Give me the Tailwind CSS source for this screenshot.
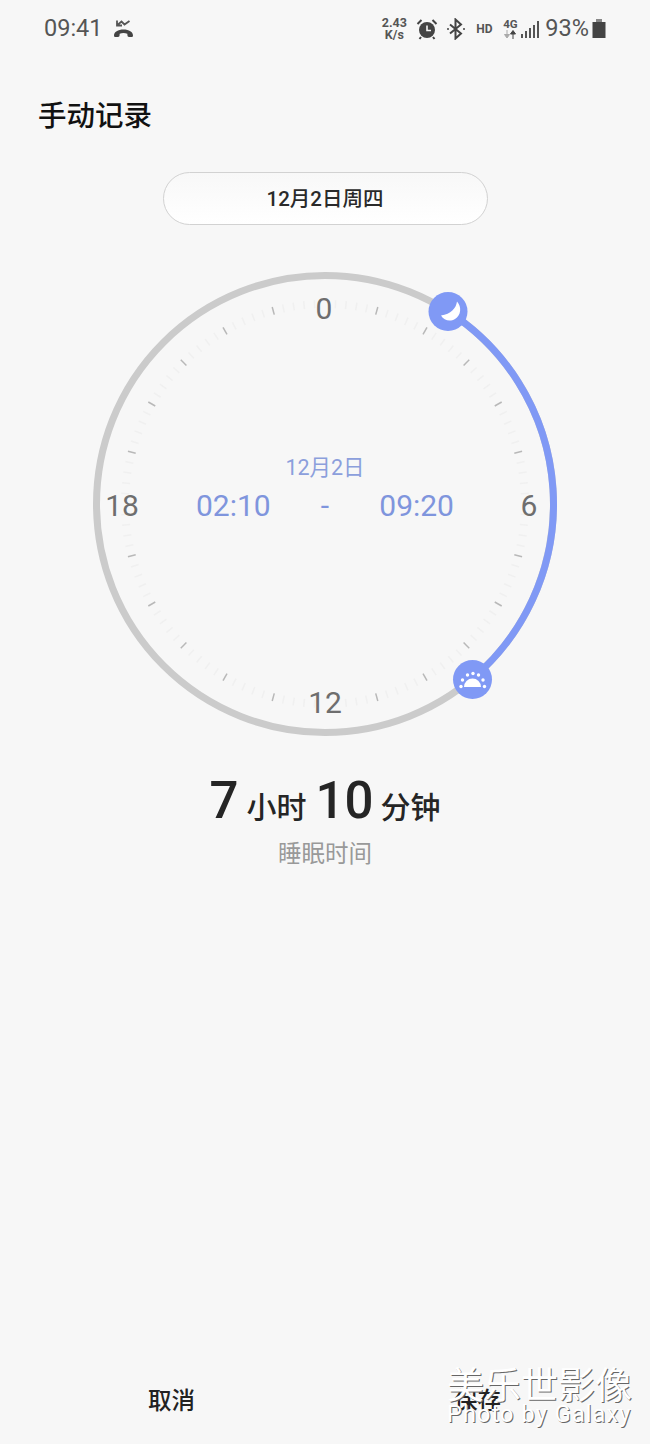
<!DOCTYPE html>
<html lang="zh">
<head>
<meta charset="UTF-8" />
<meta name="viewport" content="width=device-width, initial-scale=1.0" />
<script src="https://cdn.jsdelivr.net/npm/@tailwindcss/browser@4"></script>
<title>手动记录</title>
</head>
<body class="bg-[#f7f7f7] font-['Roboto','Noto_Sans_CJK_SC',sans-serif]">
<div class="relative flex flex-col w-[650px] h-[1444px] overflow-hidden">

  <!-- Status bar -->
  <div class="flex items-center justify-between h-[58px] pl-[44px] pr-[44px] text-[#555]">
    <div class="flex items-center gap-[10px]">
      <span class="text-[23.500px] leading-none">09:41</span>
      <svg width="21" height="20" viewBox="0 0 21 20" fill="#444">
        <path d="M1 16.500c0-3.600 4-6 9.500-6s9.500 2.400 9.500 6c0 1-.7 1.500-1.500 1.500h-2.600c-.8 0-1.300-.5-1.400-1.200l-.2-2c-1.200-.6-2.500-.8-3.800-.8s-2.600.2-3.800.8l-.2 2c-.1.700-.6 1.200-1.400 1.200H2.500C1.700 18 1 17.500 1 16.500z"/>
        <path d="M4 1.500v5h5M4.500 6l4-3.500 3 3 5-3.500" fill="none" stroke="#555" stroke-width="1.800"/>
      </svg>
    </div>
    <div class="flex items-center">
      <div class="w-[28px] text-center text-[12.500px] leading-[12px] font-bold text-[#555]">2.43<br />K/s</div>
      <svg class="ml-[8px]" width="22" height="22" viewBox="0 0 22 22">
        <circle cx="11" cy="12" r="8" fill="#444" />
        <path d="M11 7.500v5h4" fill="none" stroke="#f7f7f7" stroke-width="1.600" />
        <path d="M1.500 6l4-4M20.500 6l-4-4M5 19l-1.500 2M17 19l1.500 2" stroke="#444" stroke-width="2" />
      </svg>
      <svg class="ml-[8px]" width="20" height="22" viewBox="0 0 20 22" fill="none" stroke="#444" stroke-width="2">
        <path d="M4 6.500l11 9-5.500 5V1.500l5.500 5-11 9" />
        <circle cx="2" cy="11" r="1" fill="#444" stroke="none" />
        <circle cx="18" cy="11" r="1" fill="#444" stroke="none" />
      </svg>
      <span class="ml-[10px] w-[18px] text-[12px] leading-none font-bold text-[#555]">HD</span>
      <div class="ml-[8px] w-[16px] flex flex-col items-center">
        <span class="text-[11.500px] leading-[11px] font-bold text-[#555]">4G</span>
        <svg width="14" height="9" viewBox="0 0 14 9">
          <path d="M4 0v5M1.500 4.500L4 8l2.500-3.500z" stroke="#aaa" fill="#aaa" stroke-width="1" />
          <path d="M10 9V3.500M7.500 4L10 .5 12.500 4z" stroke="#444" fill="#444" stroke-width="1" />
        </svg>
      </div>
      <svg class="ml-[2px]" width="19" height="19" viewBox="0 0 19 19" fill="#555">
        <rect x="1" y="14" width="2" height="4" />
        <rect x="5" y="11" width="2" height="7" />
        <rect x="9" y="8" width="2" height="10" />
        <rect x="13" y="5" width="2" height="13" />
        <rect x="17" y="1" width="2" height="17" />
      </svg>
      <span class="ml-[6px] text-[23.500px] leading-none">93%</span>
      <svg class="ml-[3px]" width="14" height="20" viewBox="0 0 14 20" fill="#444">
        <rect x="4" y="0" width="6" height="3" fill="#888" />
        <rect x="0.500" y="3" width="13" height="16" />
      </svg>
    </div>
  </div>

  <h1 class="mt-[40px] ml-[38px] text-[28.500px] leading-[38px] font-medium text-[#111]">手动记录</h1>

  <!-- Date pill -->
  <div class="mt-[36px] mx-auto flex items-center justify-center w-[325px] h-[53px] pt-[2px] rounded-full border border-[#d2d2d2] bg-gradient-to-b from-[#f8f8f8] to-white text-[20.500px] font-medium text-[#2a2a2a]">12月2日周四</div>

  <!-- Dial -->
  <div class="relative mt-[39px] mx-auto w-[480px] h-[480px]">
    <svg id="dial" width="480" height="480" viewBox="0 0 480 480" class="absolute inset-0">
      <g id="ticks"></g>
      <circle cx="240" cy="240" r="228.500" fill="none" stroke="#cbcbcb" stroke-width="7" />
      <path d="M362.800 47.300A228.500 228.500 0 0 1 386.900 415" fill="none" stroke="#8099f5" stroke-width="7" />
      <g font-size="30" fill="#6e6e6e" text-anchor="middle">
        <text x="239" y="55">0</text>
        <text x="444" y="252">6</text>
        <text x="240" y="449">12</text>
        <text x="37" y="252">18</text>
      </g>
      <circle cx="363" cy="47.500" r="19.500" fill="#8099f5" />
      <path d="M372 37.500c-1 7-6 12.500-16 14 3 5 9 6.500 14 3.500 6-3.500 7-12 2-17.500z" fill="#fff" />
      <circle cx="387.500" cy="415.500" r="19.500" fill="#8099f5" />
      <path d="M379 423a8.500 8.500 0 0 1 17 0z" fill="#fff" />
      <g fill="#fff">
        <circle cx="376" cy="422.500" r="1.700" />
        <circle cx="377.500" cy="416" r="1.700" />
        <circle cx="382.500" cy="411" r="1.700" />
        <circle cx="388" cy="409.500" r="1.700" />
        <circle cx="393.500" cy="411" r="1.700" />
        <circle cx="398" cy="416" r="1.700" />
        <circle cx="399.500" cy="422.500" r="1.700" />
      </g>
    </svg>
    <div class="absolute inset-0 flex flex-col items-center text-[#7f95dd]">
      <span class="mt-[191px] text-[21.500px] leading-[26px] text-[#8c9fdc]">12月2日</span>
      <div class="mt-[6px] flex items-center justify-between w-[258px] text-[30px] leading-[38px]">
        <span>02:10</span><span>-</span><span>09:20</span>
      </div>
    </div>
  </div>

  <!-- Duration -->
  <div class="mt-[20px] flex items-baseline justify-center text-[#252525] font-medium">
    <span class="text-[51px] leading-[74px]">7</span>
    <span class="ml-[8px] text-[30px]">小时</span>
    <span class="ml-[9px] text-[51px] leading-[74px]">10</span>
    <span class="ml-[7px] text-[30px]">分钟</span>
  </div>
  <p class="-mt-[1px] text-center text-[23.500px] leading-[34px] text-[#999]">睡眠时间</p>

  <!-- Footer -->
  <div class="mt-auto mb-[21px] grid grid-cols-2 text-[23.500px] leading-[44px] font-medium text-[#222]">
    <button class="ml-[18px] text-center">取消</button>
    <button class="mr-[22px] pl-[2px] text-center">保存</button>
  </div>

  <!-- Watermark -->
  <div class="absolute left-[447px] top-[1365px] w-[190px] text-white [text-shadow:1px_1px_0_#666]">
    <div class="text-[37px] leading-[44px] whitespace-nowrap">美乐世影像</div>
    <div class="-mt-[9px] text-[23.500px] leading-[28px] tracking-[1.100px] whitespace-nowrap">Photo by Galaxy</div>
  </div>
</div>

<script>
  // tick marks: one major every 15deg, four faint ones between
  const ticks = document.getElementById("ticks");
  let out = "";
  for (let i = 0; i < 120; i++) {
    if (i % 30 === 0) continue;
    const major = i % 5 === 0;
    const a = i * 3 * Math.PI / 180;
    const r1 = 196, r2 = 204;
    const x1 = 240 + r1 * Math.sin(a), y1 = 240 - r1 * Math.cos(a);
    const x2 = 240 + r2 * Math.sin(a), y2 = 240 - r2 * Math.cos(a);
    out += `<line x1="${x1}" y1="${y1}" x2="${x2}" y2="${y2}" stroke="${major ? "#b8b8b8" : "#f0f0f0"}" stroke-width="1.5" />`;
  }
  ticks.innerHTML = out;
</script>
</body>
</html>
